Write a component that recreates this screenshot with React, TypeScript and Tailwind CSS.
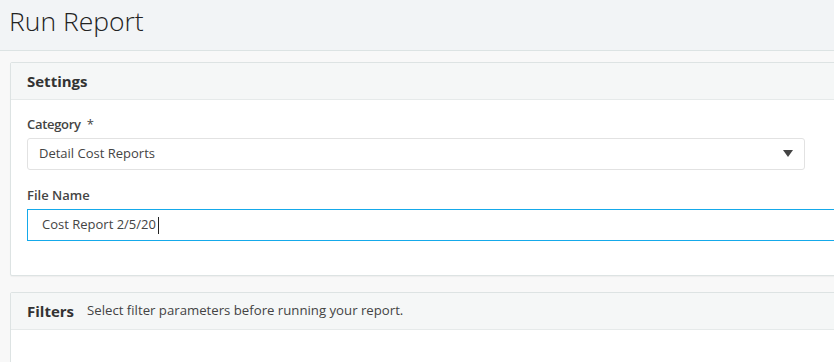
import { useState } from "react";

export default function App() {
  const [category] = useState("Detail Cost Reports");
  const [fileName, setFileName] = useState("Cost Report 2/5/20");

  return (
    <div
      className="min-h-screen w-[834px] overflow-hidden bg-[#f8f8f8] text-[#333]"
      style={{ fontFamily: '"Open Sans", "Liberation Sans", sans-serif' }}
    >
      {/* Page header */}
      <div className="h-[51px] border-b border-[#dce3e3] bg-[#f2f4f6] pl-[9px] pt-[2px]">
        <h1 className="text-[26.5px] font-light leading-[38px] text-[#222]">Run Report</h1>
      </div>

      <div className="pl-[10px] pt-[11px]">
        {/* Settings */}
        <div className="w-[840px] rounded-[2px] border border-[#dde3e3] bg-white shadow-[0_1px_1px_rgba(0,0,0,0.04)]">
          <div className="flex h-[37px] items-center border-b border-[#e6eaea] bg-[#f5f7f7] px-4">
            <h2 className="text-[15px] font-bold text-[#333]">Settings</h2>
          </div>
          <div className="px-4 pb-[34px] pt-[14px]">
            <label className="mb-[4px] block text-[13px] font-semibold leading-[20px] tracking-[-0.3px] text-[#444]">
              Category <span className="ml-[3px] font-normal tracking-normal">*</span>
            </label>
            <div className="relative flex h-[32px] w-[778px] items-center rounded-[3px] border border-[#e2e2e2] bg-white pl-[11px] text-[13px] text-[#444]">
              {category}
              <svg className="absolute right-[11px] top-[11px]" width="10" height="8" viewBox="0 0 10 8">
                <path d="M0 0 L10 0 L5 7 Z" fill="#444" />
              </svg>
            </div>

            <label className="mb-[4px] mt-[15px] block text-[13px] font-semibold leading-[20px] text-[#444]">
              File Name
            </label>
            {/* focused-looking input with a visible caret after the text */}
            <div className="flex h-[32px] w-[820px] items-center border border-[#15a9ea] bg-white pl-[14px] text-[13px] text-[#444]">
              <input
                value={fileName}
                onChange={(e) => setFileName(e.target.value)}
                className="w-[116px] bg-transparent p-0 outline-none"
              />
              <span className="h-[17px] w-px bg-[#222]" />
            </div>
          </div>
        </div>

        {/* Filters */}
        <div className="mt-[16px] w-[840px] rounded-[2px] border border-[#dde3e3] bg-white">
          <div className="flex h-[37px] items-center border-b border-[#e6eaea] bg-[#f5f7f7] px-4">
            <h2 className="text-[15px] font-bold text-[#333]">Filters</h2>
            <span className="ml-[13px] text-[13.2px] text-[#444]">
              Select filter parameters before running your report.
            </span>
          </div>
          <div className="h-[60px]" />
        </div>
      </div>
    </div>
  );
}
